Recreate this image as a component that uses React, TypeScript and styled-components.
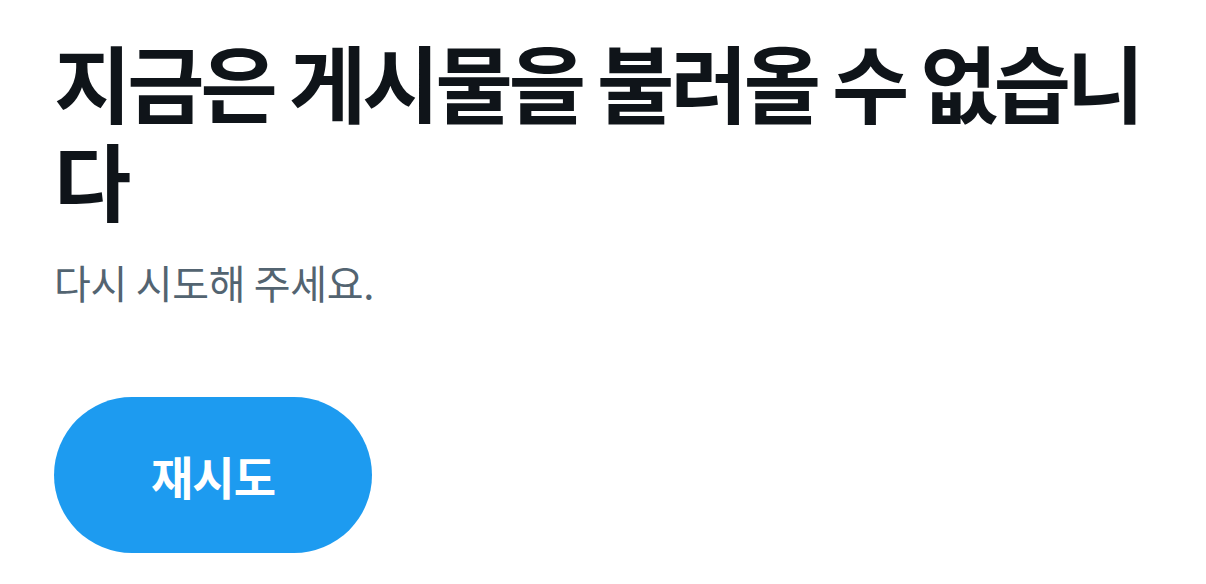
import * as React from 'react';
import styled, { createGlobalStyle } from 'styled-components';

const GlobalStyle = createGlobalStyle`
  html, body {
    margin: 0;
    padding: 0;
    background: #ffffff;
  }
  body {
    font-family: "Noto Sans CJK KR", "Noto Sans", sans-serif;
  }
`;

const Container = styled('div')`
  display: flex;
  flex-direction: column;
  align-items: flex-start;
  padding: 32px 54px 0 54px;
`;

const Title = styled('h1')`
  margin: 0;
  font-size: 84px;
  line-height: 98px;
  font-weight: 700;
  color: #0f1419;
  letter-spacing: -4px;
  max-width: 1150px;
`;

const Subtitle = styled('p')`
  margin: 30px 0 0 0;
  font-size: 40px;
  line-height: 48px;
  font-weight: 400;
  color: #536471;
  letter-spacing: -0.3px;
`;

const RetryButton = styled('button')`
  margin-top: 91px;
  width: 318px;
  height: 156px;
  border: none;
  border-radius: 78px;
  background: #1d9bf0;
  color: #ffffff;
  font-family: inherit;
  font-size: 46px;
  font-weight: 700;
  letter-spacing: -1px;
  cursor: pointer;
`;

const App = () => {
  return (
    <>
      <GlobalStyle />
      <Container>
        <Title>지금은 게시물을 불러올 수 없습니다</Title>
        <Subtitle>다시 시도해 주세요.</Subtitle>
        <RetryButton>재시도</RetryButton>
      </Container>
    </>
  );
};

export default App;
